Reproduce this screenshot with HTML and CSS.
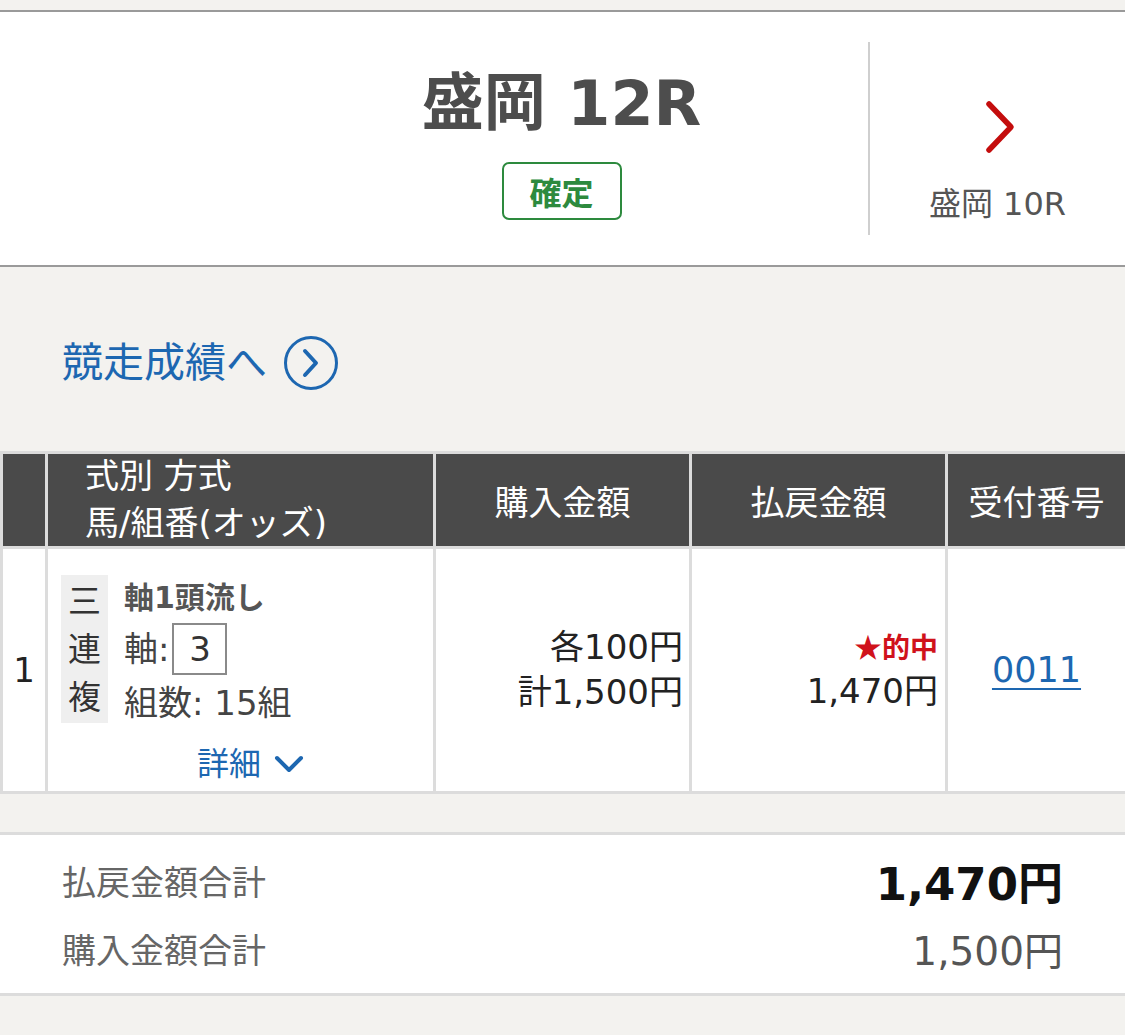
FILE: index.html
```html
<!DOCTYPE html>
<html lang="ja">
<head>
    <meta charset="UTF-8">
    <meta name="viewport" content="width=device-width, initial-scale=1.0">
    <title>投票結果</title>
    <link rel="stylesheet" href="styles.css">
</head>
<body>

    <div class="race-header">
        <div class="race-main">
            <h1 class="race-title">盛岡 12R</h1>
            <span class="status-badge">確定</span>
        </div>
        <a class="race-next" href="#">
            <svg class="next-arrow" width="32" height="54" viewBox="0 0 32 54">
                <polyline points="5,4 27,27 5,50" fill="none" stroke="#c40d0d" stroke-width="5.5" stroke-linecap="round" stroke-linejoin="round"/>
            </svg>
            <span class="next-label">盛岡 10R</span>
        </a>
    </div>

    <div class="result-link-row">
        <a class="result-link" href="#">競走成績へ
            <svg class="circle-arrow" width="56" height="56" viewBox="0 0 56 56">
                <circle cx="28" cy="28" r="25.5" fill="none" stroke="#1d67b1" stroke-width="3"/>
                <polyline points="22,16 33,28 22,40" fill="none" stroke="#1d67b1" stroke-width="4" stroke-linecap="round" stroke-linejoin="round"/>
            </svg>
        </a>
    </div>

    <div class="bet-table">
        <div class="th th-no"></div>
        <div class="th th-type">
            <span>式別 方式</span>
            <span>馬/組番(オッズ)</span>
        </div>
        <div class="th">購入金額</div>
        <div class="th">払戻金額</div>
        <div class="th">受付番号</div>

        <div class="td td-no">1</div>
        <div class="td td-type">
            <div class="bet-detail">
                <div class="bet-kind">三<br>連<br>複</div>
                <div class="bet-info">
                    <div class="bet-method">軸1頭流し</div>
                    <div class="bet-axis">軸:<span class="horse-box">3</span></div>
                    <div class="bet-count">組数: 15組</div>
                </div>
            </div>
            <a class="detail-toggle" href="#">詳細
                <svg width="32" height="18" viewBox="0 0 32 18">
                    <polyline points="4,3 16,15 28,3" fill="none" stroke="#1d67b1" stroke-width="4" stroke-linecap="round" stroke-linejoin="round"/>
                </svg>
            </a>
        </div>
        <div class="td td-amount">
            <span>各100円</span>
            <span>計1,500円</span>
        </div>
        <div class="td td-amount td-payout">
            <span class="hit"><span class="star">★</span>的中</span>
            <span>1,470円</span>
        </div>
        <div class="td td-receipt"><a href="#">0011</a></div>
    </div>

    <div class="summary">
        <div class="summary-row">
            <span class="summary-label">払戻金額合計</span>
            <span class="summary-value total">1,470円</span>
        </div>
        <div class="summary-row">
            <span class="summary-label">購入金額合計</span>
            <span class="summary-value">1,500円</span>
        </div>
    </div>

</body>
</html>
```

FILE: styles.css
```css
/* General Styles */
body {
    font-family: 'DejaVu Sans', 'Noto Sans CJK JP', sans-serif;
    margin: 0;
    padding: 10px 0 0;
    background-color: #f3f2ef;
    color: #222;
}

a {
    text-decoration: none;
}

/* Race header */
.race-header {
    display: flex;
    background-color: #fff;
    border-top: 2px solid #9a9a9a;
    border-bottom: 2px solid #9a9a9a;
    height: 257px;
    box-sizing: border-box;
}

.race-main {
    flex: 1;
    display: flex;
    flex-direction: column;
    align-items: center;
    padding: 52px 0 0 255px;
}

.race-title {
    margin: 0;
    font-size: 62px;
    line-height: 80px;
    font-weight: bold;
    color: #4d4d4d;
}

.status-badge {
    margin-top: 18px;
    width: 120px;
    height: 58px;
    box-sizing: border-box;
    border: 2px solid #2d8a3e;
    border-radius: 7px;
    color: #2d8a3e;
    font-size: 32px;
    font-weight: bold;
    display: flex;
    align-items: center;
    justify-content: center;
}

.race-next {
    width: 257px;
    margin: 30px 0;
    border-left: 2px solid #cfcfcf;
    display: flex;
    flex-direction: column;
    align-items: center;
    padding-top: 58px;
    box-sizing: border-box;
}

.next-arrow {
    display: block;
    margin-left: 4px;
}

.next-label {
    margin-top: 30px;
    font-size: 32px;
    line-height: 40px;
    color: #555;
}

/* Link to race result */
.result-link-row {
    padding: 68px 0 60px 62px;
}

.result-link {
    display: inline-flex;
    align-items: center;
    gap: 16px;
    color: #1d67b1;
    font-size: 41px;
    line-height: 56px;
}

.circle-arrow {
    display: block;
}

/* Bet table */
.bet-table {
    display: grid;
    grid-template-columns: 42px 385px 253px 253px 1fr;
    grid-template-rows: 92px 242px;
    gap: 3px;
    padding: 3px 0 3px 3px;
    background-color: #dcdcdc;
}

.th {
    background-color: #4a4a4a;
    color: #fff;
    font-size: 34px;
    display: flex;
    align-items: center;
    justify-content: center;
}

.th-type {
    flex-direction: column;
    align-items: flex-start;
    padding-left: 37px;
    line-height: 47px;
}

.td {
    background-color: #fff;
    font-size: 34px;
}

.td-no {
    display: flex;
    align-items: center;
    justify-content: center;
}

.td-type {
    padding: 26px 0 0 13px;
    display: flex;
    flex-direction: column;
}

.bet-detail {
    display: flex;
    gap: 16px;
}

.bet-kind {
    width: 47px;
    height: 148px;
    background-color: #efefef;
    text-align: center;
    font-size: 33px;
    line-height: 48px;
    padding-top: 3px;
    box-sizing: border-box;
    color: #333;
}

.bet-info {
    color: #555;
}

.bet-method {
    font-size: 30px;
    font-weight: bold;
    line-height: 46px;
}

.bet-axis {
    display: flex;
    align-items: center;
    margin-top: 2px;
    line-height: 52px;
    color: #444;
}

.horse-box {
    width: 55px;
    height: 52px;
    box-sizing: border-box;
    border: 2px solid #8a8a8a;
    margin-left: 3px;
    text-align: center;
    line-height: 48px;
    color: #333;
}

.bet-count {
    line-height: 56px;
    color: #444;
}

.detail-toggle {
    align-self: center;
    margin: 13px 0 0 8px;
    color: #1d67b1;
    font-size: 32px;
    line-height: 40px;
    display: flex;
    align-items: center;
    gap: 12px;
}

.td-amount {
    display: flex;
    flex-direction: column;
    align-items: flex-end;
    justify-content: center;
    padding-right: 6px;
    line-height: 45px;
}

.td-payout {
    padding-right: 7px;
}

.hit {
    color: #d0121b;
    font-weight: bold;
    font-size: 28px;
    line-height: 40px;
}

.star {
    font-family: 'Noto Sans CJK JP', sans-serif;
}

.td-receipt {
    display: flex;
    align-items: center;
    justify-content: center;
    font-size: 35px;
}

.td-receipt a {
    color: #1d67b1;
    text-decoration: underline;
    text-underline-offset: 6px;
    text-decoration-thickness: 2px;
}

/* Summary */
.summary {
    margin-top: 38px;
    background-color: #fff;
    border-top: 3px solid #dcdcdc;
    border-bottom: 3px solid #dcdcdc;
    padding: 11px 62px;
}

.summary-row {
    display: flex;
    justify-content: space-between;
    align-items: center;
    height: 68px;
}

.summary-label {
    font-size: 34px;
    color: #666;
}

.summary-value {
    font-size: 39px;
    color: #555;
}

.summary-value.total {
    font-size: 45px;
    font-weight: bold;
    color: #111;
}
```
